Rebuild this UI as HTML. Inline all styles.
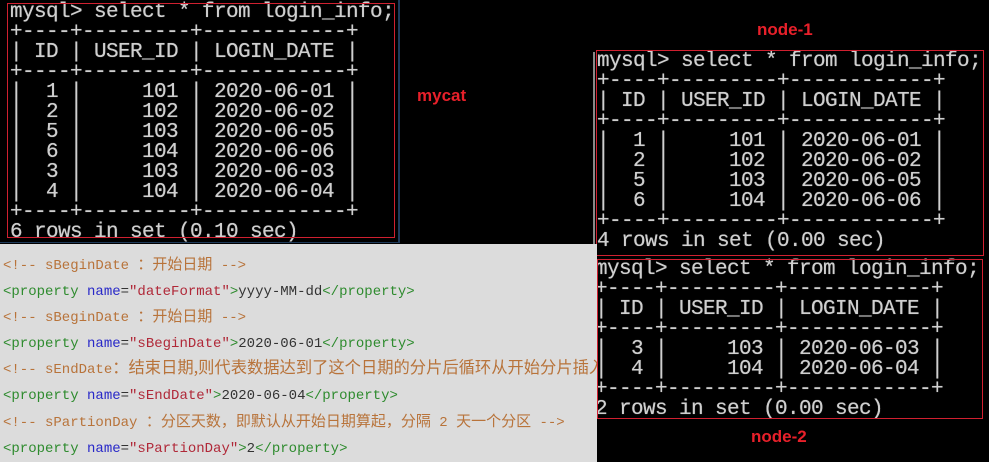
<!DOCTYPE html>
<html><head><meta charset="utf-8"><style>
html,body{margin:0;padding:0;background:#000;width:989px;height:462px;overflow:hidden;position:relative}
pre{margin:0;position:absolute;font-family:"Liberation Mono",monospace;font-size:21px;letter-spacing:-0.6px;line-height:20px;color:#cfcfcf;white-space:pre;text-shadow:0 0 0.6px #cfcfcf}
.box{position:absolute;border:1px solid #d02030}
.lbl{position:absolute;color:#e8202a;font-family:"Liberation Sans",sans-serif;font-weight:bold;font-size:17px}
.xml{position:absolute;left:0;top:244px;width:597px;height:218px;background:#dcdcdc;overflow:hidden}
.xml div{position:absolute;left:3px;font-family:"Liberation Mono",monospace;font-size:14px;white-space:pre;line-height:16px}
.z{font-family:"Noto Sans CJK SC",sans-serif;font-size:15px;line-height:1px}
.z2{font-family:"Noto Sans CJK SC",sans-serif;font-size:16.3px;line-height:1px}
.c{color:#b8733a}.t{color:#2e8b2e}.a{color:#2828c8}.v{color:#b02838}.x{color:#333}
</style></head><body>
<div style="position:absolute;left:0;top:0;width:398px;height:242px;border-right:2px solid #1e3a5a;border-bottom:1px solid #1e3a5a"></div>
<pre style="left:10px;top:3px">mysql&gt; select * from login_info;
+----+---------+------------+
| ID | USER_ID | LOGIN_DATE |
+----+---------+------------+
|  1 |     101 | 2020-06-01 |
|  2 |     102 | 2020-06-02 |
|  5 |     103 | 2020-06-05 |
|  6 |     104 | 2020-06-06 |
|  3 |     103 | 2020-06-03 |
|  4 |     104 | 2020-06-04 |
+----+---------+------------+
6 rows in set (0.10 sec)</pre>
<div class="box" style="left:7px;top:3px;width:386px;height:233px"></div>
<div class="lbl" style="left:417px;top:86px">mycat</div>
<div class="lbl" style="left:757px;top:20px">node-1</div>
<div class="lbl" style="left:751px;top:427px">node-2</div>
<div style="position:absolute;left:593px;top:52px;width:2px;height:200px;background:#888"></div>
<pre style="left:597px;top:52px">mysql&gt; select * from login_info;
+----+---------+------------+
| ID | USER_ID | LOGIN_DATE |
+----+---------+------------+
|  1 |     101 | 2020-06-01 |
|  2 |     102 | 2020-06-02 |
|  5 |     103 | 2020-06-05 |
|  6 |     104 | 2020-06-06 |
+----+---------+------------+
4 rows in set (0.00 sec)</pre>
<div class="box" style="left:596px;top:50px;width:386px;height:204px"></div>
<pre style="left:595px;top:260px">mysql&gt; select * from login_info;
+----+---------+------------+
| ID | USER_ID | LOGIN_DATE |
+----+---------+------------+
|  3 |     103 | 2020-06-03 |
|  4 |     104 | 2020-06-04 |
+----+---------+------------+
2 rows in set (0.00 sec)</pre>
<div class="box" style="left:597px;top:259px;width:384px;height:158px"></div>
<div class="xml">
<div style="top:14px"><span class="c">&lt;!-- sBeginDate <span class="z">：开始日期</span> --&gt;</span></div>
<div style="top:40px"><span class="t">&lt;property </span><span class="a">name</span><span class="x">=</span><span class="v">"dateFormat"</span><span class="t">&gt;</span><span class="x">yyyy-MM-dd</span><span class="t">&lt;/property&gt;</span></div>
<div style="top:66px"><span class="c">&lt;!-- sBeginDate <span class="z">：开始日期</span> --&gt;</span></div>
<div style="top:92px"><span class="t">&lt;property </span><span class="a">name</span><span class="x">=</span><span class="v">"sBeginDate"</span><span class="t">&gt;</span><span class="x">2020-06-01</span><span class="t">&lt;/property&gt;</span></div>
<div style="top:118px"><span class="c">&lt;!-- sEndDate<span class="z2">：结束日期,则代表数据达到了这个日期的分片后循环从开始分片插入</span></span></div>
<div style="top:144px"><span class="t">&lt;property </span><span class="a">name</span><span class="x">=</span><span class="v">"sEndDate"</span><span class="t">&gt;</span><span class="x">2020-06-04</span><span class="t">&lt;/property&gt;</span></div>
<div style="top:171px"><span class="c">&lt;!-- sPartionDay <span class="z">：分区天数，即默认从开始日期算起，分隔</span> 2 <span class="z">天一个分区</span> --&gt;</span></div>
<div style="top:197px"><span class="t">&lt;property </span><span class="a">name</span><span class="x">=</span><span class="v">"sPartionDay"</span><span class="t">&gt;</span><span class="x">2</span><span class="t">&lt;/property&gt;</span></div>
</div>
</body></html>
